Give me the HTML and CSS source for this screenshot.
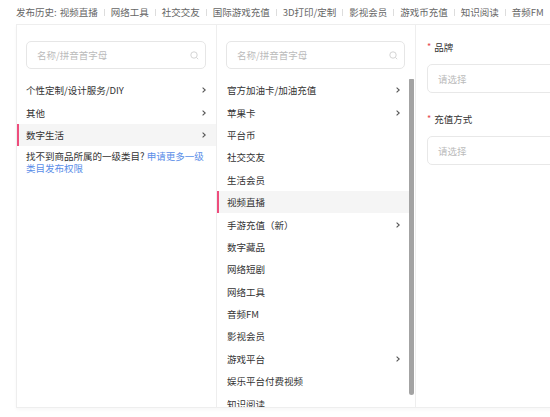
FILE: index.html
```html
<!DOCTYPE html>
<html lang="zh-CN">
<head>
<meta charset="utf-8">
<title>类目选择</title>
<link rel="stylesheet" href="styles.css">
</head>
<body>
<div class="history">
  <span class="history-label">发布历史:</span>
  <span class="history-item">视频直播</span><span class="sep"></span>
  <span class="history-item">网络工具</span><span class="sep"></span>
  <span class="history-item">社交交友</span><span class="sep"></span>
  <span class="history-item">国际游戏充值</span><span class="sep"></span>
  <span class="history-item">3D打印/定制</span><span class="sep"></span>
  <span class="history-item">影视会员</span><span class="sep"></span>
  <span class="history-item">游戏币充值</span><span class="sep"></span>
  <span class="history-item">知识阅读</span><span class="sep"></span>
  <span class="history-item">音频FM</span>
</div>

<div class="panel">
  <div class="col col-1">
    <div class="search">
      <span class="placeholder">名称/拼音首字母</span>
      <svg class="search-icon" width="9" height="9" viewBox="0 0 9 9"><circle cx="4" cy="4" r="3.2" fill="none" stroke="#d4d4d4" stroke-width="1"/><path d="M6.4 6.4 L8.2 8.2" stroke="#d4d4d4" stroke-width="1"/></svg>
    </div>
    <div class="list">
      <div class="row"><span>个性定制/设计服务/DIY</span><svg class="chev" width="4" height="6" viewBox="0 0 4 6"><path d="M0.6 0.6 L3.2 3 L0.6 5.4" fill="none" stroke="#555" stroke-width="1.1"/></svg></div>
      <div class="row"><span>其他</span><svg class="chev" width="4" height="6" viewBox="0 0 4 6"><path d="M0.6 0.6 L3.2 3 L0.6 5.4" fill="none" stroke="#555" stroke-width="1.1"/></svg></div>
      <div class="row active"><span>数字生活</span><svg class="chev" width="4" height="6" viewBox="0 0 4 6"><path d="M0.6 0.6 L3.2 3 L0.6 5.4" fill="none" stroke="#555" stroke-width="1.1"/></svg></div>
    </div>
    <p class="notice">找不到商品所属的一级类目? <a class="link">申请更多一级类目发布权限</a></p>
  </div>

  <div class="col col-2">
    <div class="search">
      <span class="placeholder">名称/拼音首字母</span>
      <svg class="search-icon" width="9" height="9" viewBox="0 0 9 9"><circle cx="4" cy="4" r="3.2" fill="none" stroke="#d4d4d4" stroke-width="1"/><path d="M6.4 6.4 L8.2 8.2" stroke="#d4d4d4" stroke-width="1"/></svg>
    </div>
    <div class="scroll">
      <div class="list list-scroll">
        <div class="row"><span>官方加油卡/加油充值</span><svg class="chev" width="4" height="6" viewBox="0 0 4 6"><path d="M0.6 0.6 L3.2 3 L0.6 5.4" fill="none" stroke="#555" stroke-width="1.1"/></svg></div>
        <div class="row"><span>苹果卡</span><svg class="chev" width="4" height="6" viewBox="0 0 4 6"><path d="M0.6 0.6 L3.2 3 L0.6 5.4" fill="none" stroke="#555" stroke-width="1.1"/></svg></div>
        <div class="row"><span>平台币</span></div>
        <div class="row"><span>社交交友</span></div>
        <div class="row"><span>生活会员</span></div>
        <div class="row active"><span>视频直播</span></div>
        <div class="row"><span>手游充值（新）</span><svg class="chev" width="4" height="6" viewBox="0 0 4 6"><path d="M0.6 0.6 L3.2 3 L0.6 5.4" fill="none" stroke="#555" stroke-width="1.1"/></svg></div>
        <div class="row"><span>数字藏品</span></div>
        <div class="row"><span>网络短剧</span></div>
        <div class="row"><span>网络工具</span></div>
        <div class="row"><span>音频FM</span></div>
        <div class="row"><span>影视会员</span></div>
        <div class="row"><span>游戏平台</span><svg class="chev" width="4" height="6" viewBox="0 0 4 6"><path d="M0.6 0.6 L3.2 3 L0.6 5.4" fill="none" stroke="#555" stroke-width="1.1"/></svg></div>
        <div class="row"><span>娱乐平台付费视频</span></div>
        <div class="row"><span>知识阅读</span></div>
      </div>
      <div class="thumb"></div>
    </div>
  </div>

  <div class="col col-3">
    <div class="field-label"><span class="req">*</span>品牌</div>
    <div class="select"><span class="placeholder">请选择</span></div>
    <div class="field-label second"><span class="req">*</span>充值方式</div>
    <div class="select"><span class="placeholder">请选择</span></div>
  </div>
</div>
</body>
</html>
```

FILE: styles.css
```css
html, body {
  margin: 0;
  padding: 0;
  overflow: hidden;
  background: #ffffff;
}

body {
  width: 550px;
  height: 417px;
  font-family: "Noto Sans CJK SC", "Noto Sans", sans-serif;
  font-size: 9.5px;
  color: #333333;
}

.history {
  height: 24px;
  display: flex;
  align-items: center;
  padding-left: 16px;
  color: #666666;
  white-space: nowrap;
}

.history-label {
  margin-right: 3px;
}

.sep {
  display: inline-block;
  width: 1px;
  height: 7px;
  background: #dddddd;
  margin: 0 6px;
}

.panel {
  margin-left: 16px;
  width: 620px;
  height: 384px;
  box-sizing: border-box;
  border: 1px solid #eeeeee;
  display: flex;
  box-shadow: 0 2px 3px rgba(0, 0, 0, 0.03);
}

.col {
  display: flex;
  flex-direction: column;
  padding-top: 16px;
  box-sizing: border-box;
  min-height: 0;
}

.col-1 {
  width: 200px;
  border-right: 1px solid #eeeeee;
}

.col-2 {
  width: 199px;
  border-right: 1px solid #eeeeee;
}

.col-3 {
  flex: 1;
  padding-left: 11px;
}

.search {
  height: 28px;
  box-sizing: border-box;
  border: 1px solid #e6e6e6;
  border-radius: 5px;
  display: flex;
  align-items: center;
  justify-content: space-between;
  padding: 0 6px 0 10px;
  margin: 0 10px 0 9px;
}

.placeholder {
  color: #bbbbbb;
}

.search-icon {
  display: block;
}

.list {
  margin-top: 10px;
}

.row {
  height: 22.4px;
  box-sizing: border-box;
  display: flex;
  align-items: center;
  justify-content: space-between;
  padding: 0 10px 0 7px;
  border-left: 2px solid transparent;
  white-space: nowrap;
}

.row.active {
  background: #f5f5f5;
  border-left-color: #ee4d7d;
}

.chev {
  display: block;
  flex-shrink: 0;
}

.notice {
  margin: 4px 10px 0 9px;
  line-height: 12px;
  color: #333333;
}

.link {
  color: #5a8ee8;
}

.scroll {
  position: relative;
  flex: 1;
  min-height: 0;
  overflow: hidden;
  margin-top: 10px;
}

.list-scroll {
  margin-top: 0;
  padding-right: 6px;
}

.list-scroll .row {
  padding-left: 8px;
  padding-right: 9px;
}

.thumb {
  position: absolute;
  top: -1px;
  right: 1px;
  width: 5px;
  height: 317px;
  border-radius: 3px;
  background: #a3a3a3;
}

.field-label {
  height: 12px;
  line-height: 12px;
  display: flex;
  align-items: center;
  color: #333333;
}

.field-label.second {
  margin-top: 20px;
}

.req {
  color: #e5484d;
  margin-right: 3px;
  font-size: 9px;
}

.select {
  margin-top: 11px;
  height: 29px;
  box-sizing: border-box;
  border: 1px solid #e8e8e8;
  border-radius: 5px;
  display: flex;
  align-items: center;
  padding-left: 10px;
}
```
